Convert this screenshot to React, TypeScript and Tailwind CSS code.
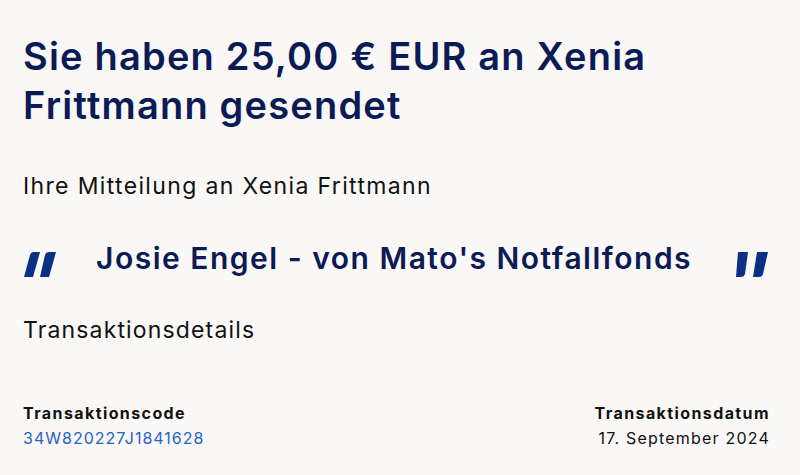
import React from "react";

function LeftQuote() {
  return (
    <svg width="34" height="25" viewBox="0 0 34 25" className="shrink-0 mt-[12px]">
      <path d="M7 3 Q8 0 11 0 L17 0 L10 25 L1 25 Z" fill="#0a2f85" />
      <path d="M22 3 Q23 0 26 0 L33 0 L26 25 L17 25 Z" fill="#0a2f85" />
    </svg>
  );
}

function RightQuote() {
  return (
    <svg width="34" height="25" viewBox="0 0 34 25" className="shrink-0 mt-[12px]">
      <path d="M2 0 L12 0 L9 22 Q8 25 5 25 L0 25 Z" fill="#0a2f85" />
      <path d="M21 0 L32 0 L27 22 Q26 25 23 25 L17 25 Z" fill="#0a2f85" />
    </svg>
  );
}

export default function App() {
  return (
    <div
      className="w-[800px] h-[475px] bg-[#f9f8f6] pl-[23px] pr-[30px] pt-[32px] overflow-hidden"
      style={{ fontFamily: "Inter, 'Liberation Sans', Arial, sans-serif" }}
    >
      <h1 className="text-[38px] leading-[49px] font-semibold tracking-[1.2px] text-[#0c1a55]">
        Sie haben 25,00 € EUR an Xenia
        <br />
        Frittmann gesendet
      </h1>
      <p className="mt-[42px] text-[23px] leading-[28px] tracking-[1.35px] text-[#111]">
        Ihre Mitteilung an Xenia Frittmann
      </p>
      <div className="mt-[40px] flex items-start justify-between">
        <LeftQuote />
        <div className="flex-1 pl-[39px] text-[30px] leading-[36px] font-semibold tracking-[1.5px] text-[#0c1a55]">
          Josie Engel - von Mato's Notfallfonds
        </div>
        <RightQuote />
      </div>
      <p className="mt-[39px] text-[23px] leading-[28px] tracking-[1.15px] text-[#111]">
        Transaktionsdetails
      </p>
      <div className="mt-[58px] flex justify-between">
        <div>
          <div className="text-[16px] leading-[22px] font-bold tracking-[1.4px] text-[#111]">Transaktionscode</div>
          <div className="mt-[3px] text-[16px] leading-[22px] tracking-[1px] text-[#2563c4]">34W820227J1841628</div>
        </div>
        <div className="text-right">
          <div className="text-[16px] leading-[22px] font-bold tracking-[1.4px] text-[#111]">Transaktionsdatum</div>
          <div className="mt-[3px] text-[16px] leading-[22px] tracking-[1.2px] text-[#111]">17. September 2024</div>
        </div>
      </div>
    </div>
  );
}
